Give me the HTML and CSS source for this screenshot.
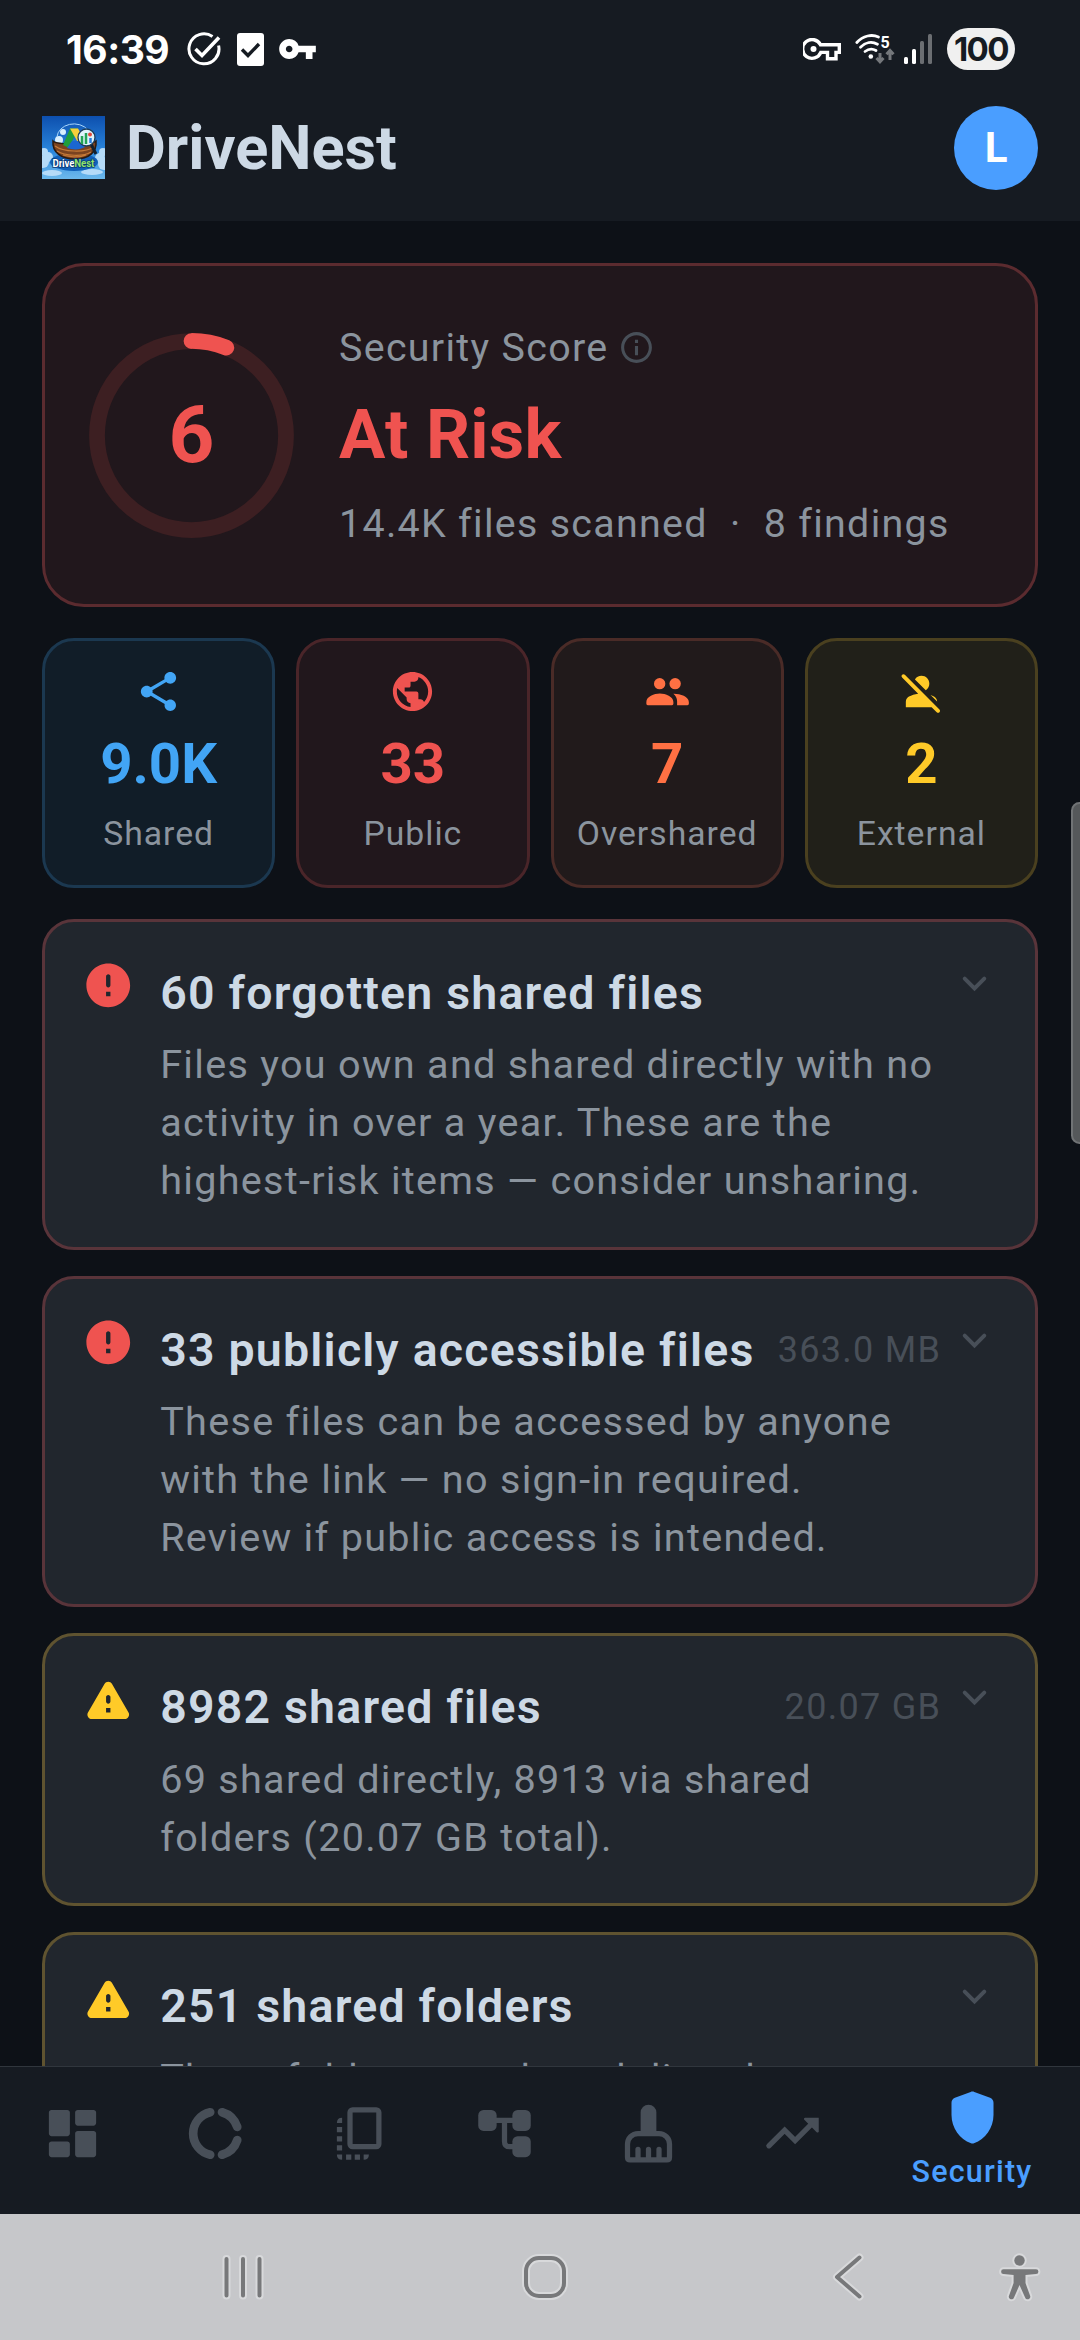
FILE: index.html
```
<!DOCTYPE html>
<html lang="en">
<head>
    <meta charset="UTF-8">
    <meta name="viewport" content="width=device-width, initial-scale=1.0">
    <title>DriveNest</title>
    <link rel="stylesheet" href="styles.css">
</head>
<body>
    <div class="screen">
        <div class="status-bar">
            <span class="clock">16:39</span>
            <svg class="st-check" viewBox="0 0 34 34" fill="none" stroke="#fff" stroke-width="3"><path d="M25.5 4.5A15 15 0 1 0 31.6 13.5"/><path d="M8.5 17l6.5 6.5L32 5.500" stroke-width="3.6"/></svg>
            <svg class="st-box" viewBox="0 0 27 33"><rect width="27" height="33" rx="3" fill="#fff"/><path d="M5 16.500l6 6L22 11" fill="none" stroke="#161b22" stroke-width="3.400"/></svg>
            <svg class="st-key" viewBox="1 6 22 12"><path fill="#fff" d="M12.650 10A5.990 5.990 0 0 0 7 6c-3.310 0-6 2.690-6 6s2.690 6 6 6a5.990 5.990 0 0 0 5.650-4H17v4h4v-4h2v-4H12.650zM7 14c-1.100 0-2-.9-2-2s.9-2 2-2 2 .9 2 2-.9 2-2 2z"/></svg>
            <div class="status-right">
                <svg class="st-vpn" viewBox="0 0 38 23"><path d="M17.500 6.800H36.300v7.600H33v6.400H24.500v-6.400H17.800A9.400 9.400 0 1 1 17.500 6.800z" fill="none" stroke="#fff" stroke-width="3.400"/><circle cx="10.500" cy="11" r="3" fill="#fff"/></svg>
                <svg class="st-wifi" viewBox="0 0 40 30">
                    <g fill="none" stroke="#fff" stroke-width="2.800" stroke-linecap="round"><path d="M1.800 8.500C8 1.500 17 0 23.500 3"/><path d="M5.500 13.200c5-5 11.500-6 17-3"/><path d="M10 17.500c3.500-2.700 7.500-3 11-1"/></g>
                    <circle cx="15.800" cy="22.500" r="2.300" fill="#fff"/>
                    <text x="25.500" y="13.500" class="wifi-num">5</text>
                    <path d="M25 19v8.500m-3.500-3.500 3.500 3.700 3.500-3.700M35 26v-9.500m-3.500 3.700 3.500-3.700 3.500 3.700" fill="none" stroke="#74777b" stroke-width="3"/>
                </svg>
                <svg class="st-signal" viewBox="0 0 28 30"><g fill="#fff"><rect y="23" width="4" height="7" rx="1.500"/><rect x="8" y="15" width="4" height="15" rx="1.500"/></g><g fill="#6b6e72"><rect x="16" y="7" width="4" height="23" rx="1.500"/><rect x="24" width="4" height="30" rx="1.500"/></g></svg>
                <span class="battery">100</span>
            </div>
        </div>

        <header class="app-header">
            <svg class="logo" viewBox="0 0 63 63">
                <defs>
                    <linearGradient id="sky" x1="0" y1="0" x2="0" y2="1"><stop offset="0" stop-color="#0d4fae"/><stop offset=".55" stop-color="#2a86dc"/><stop offset="1" stop-color="#6db9ec"/></linearGradient>
                </defs>
                <rect width="63" height="63" fill="url(#sky)"/>
                <g fill="#b5dbf8"><circle cx="2" cy="36" r="4"/><circle cx="6" cy="41" r="5"/><circle cx="1" cy="46" r="6"/><circle cx="61" cy="36" r="4"/><circle cx="58" cy="42" r="5"/><circle cx="62" cy="48" r="6"/><ellipse cx="10" cy="57" rx="10" ry="3"/><ellipse cx="50" cy="56" rx="11" ry="3"/></g>
                <ellipse cx="32" cy="46" rx="24" ry="9" fill="#1160b8"/>
                <g fill="#d9effd"><circle cx="21" cy="16" r="3"/><circle cx="17" cy="24" r="4"/></g>
                <path d="M15 21a17 14 0 0 1 31-7" fill="none" stroke="#a9d6fb" stroke-width="1"/>
                <path d="M11 25c4 4 38 4 43 0 1 11-7 18-21 18S10 36 11 25z" fill="#7a4320" stroke="#2b1a10" stroke-width="1.500"/>
                <path d="M13 30c8 6 30 7 39 1M15 35c8 5 26 6 34 1M21 39c6 2 16 3 23 0" fill="none" stroke="#c67a38" stroke-width="1.200"/>
                <path d="M28 12.500h8L27 32l-6-3z" fill="#1f9e3c"/>
                <path d="M28 12.500h8l8 14h-8z" fill="#f7cf3c"/>
                <path d="M25 32l5-7h9l4 6c-5 3-12 3-18 1z" fill="#1b66d0"/>
                <path d="M49 28l5 10" stroke="#14202e" stroke-width="3"/>
                <circle cx="44.500" cy="21.500" r="8.500" fill="#dff3fb" stroke="#1c3c58" stroke-width="1.300"/>
                <path d="M40 20v8M44 17v11" stroke="#23a455" stroke-width="2.500"/><path d="M48.500 22v5" stroke="#2a7de0" stroke-width="2.500"/><circle cx="48" cy="18.500" r="2" fill="#e2483b"/>
                <text x="10.500" y="51" class="logo-text" textLength="42">Drive<tspan fill="#8fe36b">Nest</tspan></text>
            </svg>
            <h1>DriveNest</h1>
            <div class="avatar">L</div>
        </header>

        <main class="content">
            <section class="score-card">
                <div class="ring">
                    <svg viewBox="0 0 205 205" fill="none" stroke-width="15.750">
                        <circle cx="102.500" cy="102.500" r="94.500" stroke="#3d1f22"/>
                        <path d="M102.500 8A94.500 94.500 0 0 1 137.300 14.600" stroke="#ef5350" stroke-linecap="round"/>
                    </svg>
                    <span>6</span>
                </div>
                <div class="score-info">
                    <div class="score-label">Security Score
                        <svg viewBox="0 0 24 24" fill="#484f58"><path d="M11 7h2v2h-2zm0 4h2v6h-2zm1-9C6.480 2 2 6.480 2 12s4.480 10 10 10 10-4.480 10-10S17.520 2 12 2zm0 18c-4.410 0-8-3.590-8-8s3.590-8 8-8 8 3.590 8 8-3.590 8-8 8z"/></svg>
                    </div>
                    <div class="score-state">At Risk</div>
                    <div class="score-sub">14.4K files scanned&nbsp; ·&nbsp; 8 findings</div>
                </div>
            </section>

            <section class="stats">
                <div class="stat blue">
                    <svg viewBox="0 0 24 24"><path d="M18 16.080c-.76 0-1.440.3-1.960.77L8.910 12.700c.05-.23.09-.46.09-.7s-.04-.47-.09-.7l7.050-4.110c.54.5 1.250.81 2.040.81 1.660 0 3-1.340 3-3s-1.340-3-3-3-3 1.340-3 3c0 .24.04.47.09.7L8.040 9.810C7.500 9.310 6.790 9 6 9c-1.660 0-3 1.340-3 3s1.340 3 3 3c.79 0 1.500-.31 2.040-.81l7.120 4.160c-.05.21-.08.43-.08.65 0 1.610 1.310 2.920 2.920 2.920s2.920-1.310 2.920-2.920-1.310-2.920-2.920-2.920z"/></svg>
                    <strong>9.0K</strong>
                    <span>Shared</span>
                </div>
                <div class="stat red">
                    <svg viewBox="0 0 24 24"><path d="M12 2C6.480 2 2 6.480 2 12s4.480 10 10 10 10-4.480 10-10S17.520 2 12 2zm-1 17.930c-3.950-.49-7-3.850-7-7.930 0-.62.08-1.210.21-1.790L9 15v1c0 1.100.9 2 2 2v1.930zm6.900-2.540c-.26-.81-1-1.390-1.900-1.390h-1v-3c0-.55-.45-1-1-1H8v-2h2c.55 0 1-.45 1-1V7h2c1.100 0 2-.9 2-2v-.41c2.930 1.190 5 4.060 5 7.410 0 2.080-.8 3.970-2.100 5.390z"/></svg>
                    <strong>33</strong>
                    <span>Public</span>
                </div>
                <div class="stat orange">
                    <svg viewBox="0 0 24 24"><circle cx="8" cy="8" r="2.900"/><circle cx="15.900" cy="8" r="2.900"/><path d="M1.200 17.300c0-2.700 4-4.300 6.900-4.300s6.900 1.600 6.900 4.300v1q0 .7-.7.700H1.900q-.7 0-.7-.7zM15 13.100c3.200-.1 7.900 1.300 7.900 4.200v1q0 .7-.7.700h-5.300v-2c0-1.700-.8-3-1.900-3.900z"/></svg>
                    <strong>7</strong>
                    <span>Overshared</span>
                </div>
                <div class="stat yellow">
                    <svg viewBox="0 0 24 24"><path d="M8.650 5.820C9.360 4.720 10.600 4 12 4c2.210 0 4 1.790 4 4 0 1.400-.72 2.640-1.820 3.350L8.650 5.820zM20 17.170c-.02-1.100-.63-2.110-1.610-2.620-.54-.28-1.130-.54-1.770-.76L20 17.170zM2.100 3.500c-.4.4-.4 1 0 1.400l8.200 8.240c-1.820.23-3.410.8-4.700 1.460C4.610 15.110 4 16.130 4 17.240V20h13.170l2.600 2.600c.4.4 1 .4 1.400 0s.4-1 0-1.400L3.500 3.500c-.4-.4-1-.4-1.400 0z"/></svg>
                    <strong>2</strong>
                    <span>External</span>
                </div>
            </section>

            <article class="finding danger">
                <svg class="sev" viewBox="0 0 24 24"><path d="M12 2C6.480 2 2 6.480 2 12s4.480 10 10 10 10-4.480 10-10S17.520 2 12 2zm0 11c-.55 0-1-.45-1-1V8c0-.55.45-1 1-1s1 .45 1 1v4c0 .55-.45 1-1 1zm1 4h-2v-2h2v2z"/></svg>
                <div class="finding-body">
                    <div class="finding-head"><h2>60 forgotten shared files</h2></div>
                    <p>Files you own and shared directly with no activity in over a year. These are the highest-risk items — consider unsharing.</p>
                </div>
                <svg class="chev" viewBox="0 0 24 24"><path d="M7 10l5 5 5-5"/></svg>
            </article>

            <article class="finding danger">
                <svg class="sev" viewBox="0 0 24 24"><path d="M12 2C6.480 2 2 6.480 2 12s4.480 10 10 10 10-4.480 10-10S17.520 2 12 2zm0 11c-.55 0-1-.45-1-1V8c0-.55.45-1 1-1s1 .45 1 1v4c0 .55-.45 1-1 1zm1 4h-2v-2h2v2z"/></svg>
                <div class="finding-body">
                    <div class="finding-head"><h2>33 publicly accessible files</h2><span class="size">363.0 MB</span></div>
                    <p>These files can be accessed by anyone with the link — no sign-in required. Review if public access is intended.</p>
                </div>
                <svg class="chev" viewBox="0 0 24 24"><path d="M7 10l5 5 5-5"/></svg>
            </article>

            <article class="finding warn">
                <svg class="sev" viewBox="0 0 24 24"><path d="M4.470 21h15.060c1.540 0 2.500-1.670 1.730-3L13.730 4.990c-.77-1.330-2.690-1.330-3.460 0L2.740 18c-.77 1.330.19 3 1.730 3zM12 14c-.55 0-1-.45-1-1v-2c0-.55.45-1 1-1s1 .45 1 1v2c0 .55-.45 1-1 1zm1 4h-2v-2h2v2z"/></svg>
                <div class="finding-body">
                    <div class="finding-head"><h2>8982 shared files</h2><span class="size">20.07 GB</span></div>
                    <p>69 shared directly, 8913 via shared folders (20.07 GB total).</p>
                </div>
                <svg class="chev" viewBox="0 0 24 24"><path d="M7 10l5 5 5-5"/></svg>
            </article>

            <article class="finding warn">
                <svg class="sev" viewBox="0 0 24 24"><path d="M4.470 21h15.060c1.540 0 2.500-1.670 1.730-3L13.730 4.990c-.77-1.330-2.690-1.330-3.460 0L2.740 18c-.77 1.330.19 3 1.730 3zM12 14c-.55 0-1-.45-1-1v-2c0-.55.45-1 1-1s1 .45 1 1v2c0 .55-.45 1-1 1zm1 4h-2v-2h2v2z"/></svg>
                <div class="finding-body">
                    <div class="finding-head"><h2>251 shared folders</h2></div>
                    <p>These folders are shared directly.</p>
                </div>
                <svg class="chev" viewBox="0 0 24 24"><path d="M7 10l5 5 5-5"/></svg>
            </article>
        </main>

        <nav class="tabs">
            <div class="tab"><svg viewBox="0 0 24 24"><path d="M4 13h6c.55 0 1-.45 1-1V4c0-.55-.45-1-1-1H4c-.55 0-1 .45-1 1v8c0 .55.45 1 1 1zm0 8h6c.55 0 1-.45 1-1v-4c0-.55-.45-1-1-1H4c-.55 0-1 .45-1 1v4c0 .55.45 1 1 1zm10 0h6c.55 0 1-.45 1-1v-8c0-.55-.45-1-1-1h-6c-.55 0-1 .45-1 1v8c0 .55.45 1 1 1zM13 4v4c0 .55.45 1 1 1h6c.55 0 1-.45 1-1V4c0-.55-.45-1-1-1h-6c-.55 0-1 .45-1 1z"/></svg></div>
            <div class="tab"><svg viewBox="0 0 24 24"><path class="line thick" d="M9.600 3.900a8.300 8.300 0 0 0 0 16.200M14.100 3.900a8.600 8.600 0 0 1 5.800 5.600M14.100 20.100a8.600 8.600 0 0 0 5.800-5.600"/></svg></div>
            <div class="tab"><svg viewBox="0 0 24 24"><rect class="line" x="8" y="3" width="11" height="14" rx="1"/><path d="M3 8q0-2 2-2v2zM3 9.500h2v2H3zM3 13h2v2H3zM3 16.500h2v2H3zM3 20h2v2q-2 0-2-2zM6.500 20h2v2h-2zM9.800 20h2v2h-2zM13.200 20h2q0 2-2 2z"/></svg></div>
            <div class="tab"><svg viewBox="0 0 24 24"><rect x="2" y="3" width="7" height="8" rx="2"/><rect x="15" y="3" width="7" height="8" rx="2"/><rect x="15" y="13" width="7" height="8" rx="2"/><path class="line" d="M8 7h8M12 7v8q0 2 2 2h2"/></svg></div>
            <div class="tab"><svg viewBox="0 0 24 24"><path d="M9 11.500V4a3 3 0 0 1 6 0v7.500z"/><path class="line" d="M8 12h8a4 4 0 0 1 4 4v5q0 1-1 1H5q-1 0-1-1v-5a4 4 0 0 1 4-4z"/><path class="line" stroke-linecap="round" d="M8 18v3.500M12 18v3.500M16 18v3.500"/></svg></div>
            <div class="tab"><svg viewBox="0 0 24 24"><path class="line" stroke-linecap="round" d="M3 16.700l6-6 4 4L20 7.700"/><path d="M16.800 6H22v5.200c0 .4-.5.600-.8.300l-4.700-4.700c-.3-.3-.1-.8.300-.8z"/></svg></div>
            <div class="tab active"><svg viewBox="0 0 24 24"><path d="M11.300 2.260l-6 2.250C4.520 4.810 4 5.550 4 6.390v4.700c0 4.830 3.130 9.370 7.430 10.750.37.120.77.120 1.140 0C16.870 20.460 20 15.930 20 11.090v-4.700c0-.83-.52-1.580-1.300-1.870l-6-2.250c-.45-.18-.95-.18-1.400-.010z"/></svg><span>Security</span></div>
        </nav>

        <div class="system-nav">
            <svg viewBox="0 0 1080 126" fill="none" stroke-linecap="round" stroke-linejoin="round">
                <defs>
                    <g id="keys"><path d="M226.500 45v36.500M243 45v36.500M259.500 45v36.500"/><rect x="526" y="44" width="38" height="38" rx="13"/><path d="M859.500 43.500L837 63l22.500 19.500"/></g>
                    <g id="person"><circle cx="1019.500" cy="46.500" r="5.200"/><path d="M1003.500 55.300h32.500a2.400 2.400 0 0 1 0 4.800l-10.500 1v8l4.600 12.700a2.600 2.600 0 0 1-5 1.700L1019.500 71l-5.500 12.500a2.600 2.600 0 0 1-5-1.700l4.600-12.700v-8l-10.100-1a2.400 2.400 0 0 1 0-4.800z"/></g>
                </defs>
                <use href="#keys" stroke="#d8d9db" stroke-width="8"/>
                <use href="#keys" stroke="#77787a" stroke-width="4"/>
                <use href="#person" stroke="#d8d9db" stroke-width="4" fill="#d8d9db"/>
                <use href="#person" fill="#77787a"/>
            </svg>
        </div>
        <div class="edge-handle"></div>
    </div>
</body>
</html>
```
FILE: styles.css
```
* {
    box-sizing: border-box;
}

body {
    margin: 0;
    background-color: #0d1117;
    color: #cdd9e5;
    font-family: Roboto, sans-serif;
}

h1, h2, p {
    margin: 0;
}

svg {
    display: block;
    flex: none;
}

.screen {
    position: relative;
    display: flex;
    flex-direction: column;
    width: 1080px;
    height: 2340px;
    overflow: hidden;
}

/* status bar */
.status-bar {
    display: flex;
    align-items: center;
    height: 98px;
    padding: 0 65px 0 66px;
    background-color: #161b22;
}

.clock {
    width: 121px;
    font-family: Inter, sans-serif;
    font-size: 39px;
    font-weight: 700;
    color: #fff;
    letter-spacing: -0.5px;
}

.st-check {
    width: 34px;
    height: 34px;
}

.st-box {
    width: 27px;
    height: 33px;
    margin-left: 16px;
}

.st-key {
    width: 37px;
    height: 20px;
    margin-left: 15px;
}

.status-right {
    display: flex;
    align-items: center;
    margin-left: auto;
}

.st-vpn {
    width: 38px;
    height: 23px;
}

.st-wifi {
    width: 40px;
    height: 30px;
    margin-left: 14px;
    overflow: visible;
}

.wifi-num {
    font: 700 16px Roboto, sans-serif;
    fill: #fff;
}

.st-signal {
    width: 28px;
    height: 30px;
    margin-left: 9px;
}

.battery {
    width: 68px;
    height: 42px;
    margin-left: 15px;
    border-radius: 21px;
    background-color: #f0f0f0;
    color: #161b22;
    font-family: Inter, sans-serif;
    font-size: 33px;
    font-weight: 700;
    line-height: 42px;
    letter-spacing: -1.5px;
    text-align: center;
}

/* app header */
.app-header {
    display: flex;
    align-items: center;
    height: 123px;
    padding: 0 42px 24px;
    background-color: #161b22;
}

.logo {
    width: 63px;
    height: 63px;
}

.logo-text {
    font: 700 10px Roboto, sans-serif;
    fill: #fff;
    stroke: #0b3a75;
    stroke-width: 1.5px;
    paint-order: stroke;
}

.app-header h1 {
    margin-left: 21px;
    font-size: 61.300px;
    font-weight: 700;
    line-height: 72px;
}

.avatar {
    width: 84px;
    height: 84px;
    margin-left: auto;
    border-radius: 50%;
    background-color: #4a9eff;
    color: #fff;
    font-size: 42px;
    font-weight: 700;
    line-height: 84px;
    text-align: center;
}

/* scrolling content */
.content {
    flex: 1;
    min-height: 0;
    padding: 42px 42px 0;
    overflow: hidden;
}

.score-card {
    display: flex;
    align-items: center;
    height: 344px;
    padding-left: 44px;
    border: 3px solid #5b2b2f;
    border-radius: 42px;
    background-color: #21171c;
}

.ring {
    display: grid;
    place-items: center;
    width: 205px;
    height: 205px;
}

.ring svg, .ring span {
    grid-area: 1 / 1;
}

.ring svg {
    width: 205px;
    height: 205px;
}

.ring span {
    color: #ef5350;
    font-size: 80px;
    font-weight: 700;
}

.score-info {
    margin-left: 45px;
}

.score-label {
    display: flex;
    align-items: center;
    gap: 10px;
    height: 59px;
    color: #8b949e;
    font-size: 39.4px;
    letter-spacing: 1.3px;
}

.score-label svg {
    width: 37px;
    height: 37px;
}

.score-state {
    margin: 9px 0 10px;
    color: #ef5350;
    font-size: 69px;
    font-weight: 700;
    line-height: 98px;
    letter-spacing: 0.2px;
}

.score-sub {
    color: #8b949e;
    font-size: 39.4px;
    line-height: 59px;
    letter-spacing: 1.3px;
}

.stats {
    display: grid;
    grid-template-columns: repeat(4, 1fr);
    gap: 21px;
    margin: 31px 0;
}

.stat {
    display: flex;
    flex-direction: column;
    align-items: center;
    height: 250px;
    padding-top: 27px;
    border: 3px solid;
    border-radius: 32px;
}

.stat svg {
    width: 47px;
    height: 47px;
    fill: currentColor;
}

.stat strong {
    margin-top: 7px;
    font-size: 56.400px;
    font-weight: 700;
    line-height: 84px;
}

.stat span {
    margin-top: 3px;
    color: #8b949e;
    font-size: 33.700px;
    line-height: 50px;
    letter-spacing: 1px;
}

.blue {
    color: #42a5f5;
    border-color: #1b3850;
    background-color: #111d28;
}

.red {
    color: #ef5350;
    border-color: #4a2529;
    background-color: #21171c;
}

.orange {
    color: #ff7043;
    border-color: #4a2b27;
    background-color: #211a1b;
}

.yellow {
    color: #ffca28;
    border-color: #4a401f;
    background-color: #212019;
}

/* findings */
.finding {
    display: flex;
    align-items: flex-start;
    margin-bottom: 26px;
    padding: 36.700px;
    border: 3px solid;
    border-radius: 32px;
    background-color: #21262d;
}

.danger {
    border-color: #59343a;
}

.warn {
    border-color: #5f5330;
}

.sev {
    width: 52.500px;
    height: 52.500px;
}

.danger .sev {
    fill: #ef5350;
}

.warn .sev {
    fill: #ffca28;
}

.finding-body {
    flex: 1;
    margin: 0 10px 0 26px;
}

.finding-head {
    display: flex;
    align-items: center;
    justify-content: space-between;
    height: 69px;
    white-space: nowrap;
}

.finding h2 {
    font-size: 46.500px;
    font-weight: 600;
    line-height: 69px;
    letter-spacing: 1.2px;
}

.size {
    color: #484f58;
    font-size: 36px;
    letter-spacing: 1.3px;
}

.finding p {
    margin-top: 8.700px;
    color: #8b949e;
    font-size: 39.600px;
    line-height: 58px;
    letter-spacing: 1.28px;
}

.chev {
    width: 47px;
    height: 47px;
    fill: none;
    stroke: #484f58;
    stroke-width: 2;
    stroke-linecap: round;
}

/* bottom tabs */
.tabs {
    display: flex;
    height: 148px;
    border-top: 1px solid #30363d;
    background-color: #161b22;
}

.tab {
    display: flex;
    align-items: center;
    justify-content: center;
    width: 144px;
    padding-bottom: 14px;
}

.tab svg {
    width: 63px;
    height: 63px;
    fill: #484f58;
}

.tab .line {
    fill: none;
    stroke: #484f58;
    stroke-width: 2;
}

.tab .thick {
    stroke-width: 3.300;
    stroke-linecap: round;
}

.tab.active {
    flex-direction: column;
    width: 216px;
    padding-bottom: 4px;
    color: #4a9eff;
}

.tab.active svg {
    fill: #4a9eff;
}

.tab.active span {
    margin-top: 4px;
    font-size: 30.500px;
    font-weight: 500;
    line-height: 38px;
    letter-spacing: 1.2px;
}

.system-nav {
    height: 126px;
    background-color: #c6c7ca;
}

.system-nav svg {
    width: 1080px;
    height: 126px;
}

.edge-handle {
    position: absolute;
    top: 802px;
    right: -8px;
    width: 17px;
    height: 342px;
    border: 2px solid #707375;
    border-radius: 12px;
    background-color: #55585a;
}
```
